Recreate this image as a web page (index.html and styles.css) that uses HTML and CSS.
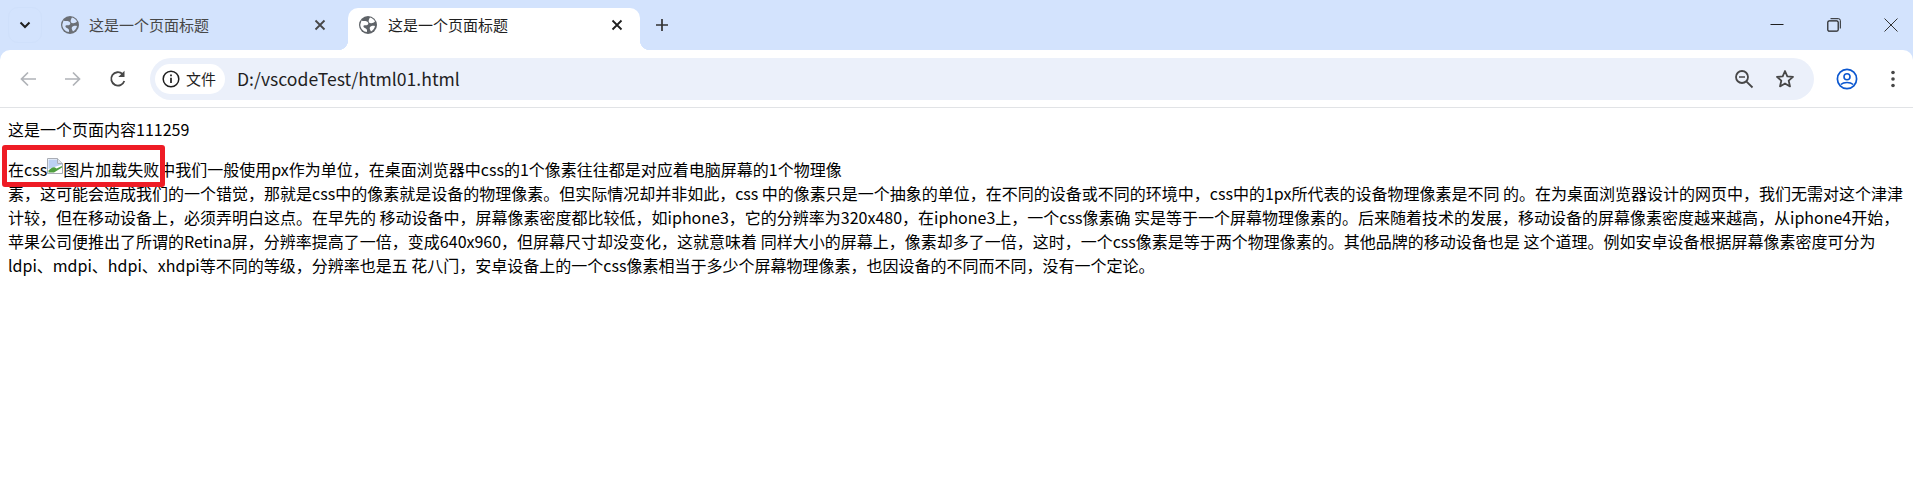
FILE: index.html
```html
<!DOCTYPE html>
<html lang="zh">
<head>
<meta charset="utf-8">
<title>这是一个页面标题</title>
<link rel="stylesheet" href="styles.css">
</head>
<body>
<header class="browser">
  <div class="tabstrip">
    <div class="tab-search"><svg width="14" height="14" viewBox="0 0 14 14"><path d="M2.500 4.500L7 9l4.500-4.500" fill="none" stroke="#1f1f1f" stroke-width="2"/></svg></div>
    <div class="tab">
      <svg class="globe" width="18" height="18" viewBox="0 0 18 18"><circle cx="9" cy="9" r="9" fill="#6b6f75"/><path d="M2.500 4.500C4 5.500 6 4.500 8 5.500s1.500 3 .2 3.500-3.500-.5-3.800 1 2 2 3 3 .5 2 .5 3C5 16 1 12.500 1.300 8.500zM11 1.500c2 .5 4 2 5 4-1.500 1.500-3 2-5 1.500S9.500 3.500 11 1.500zM11 11c1.500-1.500 3.500-1.500 5-1-.5 2.500-2 4.500-4 5.500-.5-1.500-2-3-1-4.500z" fill="#d3e3fd"/></svg>
      <span class="tab-title">这是一个页面标题</span>
      <svg class="tab-close" width="12" height="12" viewBox="0 0 12 12"><path d="M1.500 1.500l9 9M10.500 1.500l-9 9" stroke="#474747" stroke-width="1.800"/></svg>
    </div>
    <div class="tab tab-active">
      <svg class="globe" width="18" height="18" viewBox="0 0 18 18"><circle cx="9" cy="9" r="9" fill="#5f6368"/><path d="M2.500 4.500C4 5.500 6 4.500 8 5.500s1.500 3 .2 3.500-3.500-.5-3.800 1 2 2 3 3 .5 2 .5 3C5 16 1 12.500 1.300 8.500zM11 1.500c2 .5 4 2 5 4-1.500 1.500-3 2-5 1.500S9.500 3.500 11 1.500zM11 11c1.500-1.500 3.500-1.500 5-1-.5 2.500-2 4.500-4 5.500-.5-1.500-2-3-1-4.500z" fill="#fff"/></svg>
      <span class="tab-title">这是一个页面标题</span>
      <svg class="tab-close" width="12" height="12" viewBox="0 0 12 12"><path d="M1.500 1.500l9 9M10.500 1.500l-9 9" stroke="#1f1f1f" stroke-width="1.800"/></svg>
    </div>
    <svg class="new-tab" width="14" height="14" viewBox="0 0 14 14"><path d="M7 1v12M1 7h12" stroke="#333" stroke-width="1.700"/></svg>
    <div class="window-controls">
      <svg width="14" height="14" viewBox="0 0 14 14"><path d="M.5 6.500h13" stroke="#1f1f1f" stroke-width="1"/></svg>
      <svg width="14" height="14" viewBox="0 0 14 14"><rect x=".8" y="2.800" width="10.400" height="10.400" rx="1.500" fill="none" stroke="#1f1f1f" stroke-width="1.200"/><path d="M3.500 .7H11.500A1.800 1.800 0 0 1 13.300 2.500V10.500" fill="none" stroke="#1f1f1f" stroke-width="1"/></svg>
      <svg width="14" height="14" viewBox="0 0 14 14"><path d="M.5 .5l13 13M13.500 .5l-13 13" stroke="#333" stroke-width="1"/></svg>
    </div>
  </div>
  <div class="toolbar">
    <svg class="nav-icon" width="18" height="18" viewBox="0 0 18 18"><path d="M17 9H2.500M9 2.500L2.500 9 9 15.500" fill="none" stroke="#b0b3b8" stroke-width="1.700"/></svg>
    <svg class="nav-icon" width="18" height="18" viewBox="0 0 18 18"><path d="M1 9h14.500M9 2.500L15.500 9 9 15.500" fill="none" stroke="#b0b3b8" stroke-width="1.700"/></svg>
    <svg class="nav-icon" width="18" height="18" viewBox="0 0 18 18"><path d="M15.300 11A6.700 6.700 0 1 1 13.500 4" fill="none" stroke="#474747" stroke-width="1.800"/><path d="M15.500 .8v6.200H9.300z" fill="#474747"/></svg>
    <div class="omnibox">
      <div class="chip">
        <svg width="18" height="18" viewBox="0 0 18 18"><circle cx="9" cy="9" r="7.800" fill="none" stroke="#1f1f1f" stroke-width="1.500"/><path d="M9 7.800v5.200M9 4.500v1.800" stroke="#1f1f1f" stroke-width="1.700"/></svg>
        <span>文件</span>
      </div>
      <span class="url">D:/vscodeTest/html01.html</span>
      <div class="omni-actions">
        <svg width="20" height="20" viewBox="0 0 20 20"><circle cx="8" cy="8" r="6" fill="none" stroke="#474747" stroke-width="1.800"/><path d="M12.300 12.300l6.200 6.200" stroke="#474747" stroke-width="1.800"/><path d="M5 8h6" stroke="#474747" stroke-width="1.500"/></svg>
        <svg width="20" height="20" viewBox="0 0 20 20"><path d="M10 2l2.300 5.400 5.700.5-4.300 3.800 1.300 5.700-5-3-5 3 1.300-5.700L2 7.900l5.700-.5z" fill="none" stroke="#474747" stroke-width="1.800" stroke-linejoin="round"/></svg>
      </div>
    </div>
    <svg class="profile" width="22" height="22" viewBox="0 0 22 22"><circle cx="11" cy="11" r="9.600" fill="none" stroke="#0b57d0" stroke-width="1.700"/><circle cx="11" cy="8.800" r="3" fill="none" stroke="#0b57d0" stroke-width="1.600"/><path d="M4.800 16.500c3-2.600 9.400-2.600 12.400 0" fill="none" stroke="#0b57d0" stroke-width="1.600"/></svg>
    <svg class="menu" width="6" height="18" viewBox="0 0 6 18"><circle cx="3" cy="2.500" r="1.800" fill="#474747"/><circle cx="3" cy="9" r="1.800" fill="#474747"/><circle cx="3" cy="15.500" r="1.800" fill="#474747"/></svg>
  </div>
</header>
<main class="page">
  <div class="intro">这是一个页面内容111259</div>
  <p class="article">在css<span class="broken-img"><svg width="16" height="16" viewBox="0 0 16 16"><path d="M.5 .5h10l5 5v10H.5z" fill="#fff" stroke="#a9adb5"/><path d="M10.500 .5v5h5" fill="#dfe3ea" stroke="#a9adb5"/><path d="M1.500 1.500h8.500v4.500h5v.5L1.500 11z" fill="#bcd0f2"/><path d="M1.500 14.500v-2C4 10 6 8.500 8 9.500l1.500 1L15 8v1.500l-8 5z" fill="#4f9e3f"/></svg>图片加载失败</span>中我们一般使用px作为单位，在桌面浏览器中css的1个像素往往都是对应着电脑屏幕的1个物理像<br>素，这可能会造成我们的一个错觉，那就是css中的像素就是设备的物理像素。但实际情况却并非如此，css 中的像素只是一个抽象的单位，在不同的设备或不同的环境中，css中的1px所代表的设备物理像素是不同 的。在为桌面浏览器设计的网页中，我们无需对这个津津<br>计较，但在移动设备上，必须弄明白这点。在早先的 移动设备中，屏幕像素密度都比较低，如iphone3，它的分辨率为320x480，在iphone3上，一个css像素确 实是等于一个屏幕物理像素的。后来随着技术的发展，移动设备的屏幕像素密度越来越高，从iphone4开始，<br>苹果公司便推出了所谓的Retina屏，分辨率提高了一倍，变成640x960，但屏幕尺寸却没变化，这就意味着 同样大小的屏幕上，像素却多了一倍，这时，一个css像素是等于两个物理像素的。其他品牌的移动设备也是 这个道理。例如安卓设备根据屏幕像素密度可分为<br>ldpi、mdpi、hdpi、xhdpi等不同的等级，分辨率也是五 花八门，安卓设备上的一个css像素相当于多少个屏幕物理像素，也因设备的不同而不同，没有一个定论。</p>
  <div class="annotation"></div>
</main>
</body>
</html>
```
FILE: styles.css
```css
* { box-sizing: border-box; }
html, body { margin: 0; padding: 0; }
body { width: 1913px; height: 487px; overflow: hidden; background: #fff; color: #000; font: 16px/24px "Noto Sans CJK SC", "Noto Sans", sans-serif; }
.browser { height: 108px; background: #d3e3fd; }
.tabstrip { height: 50px; display: flex; align-items: flex-start; position: relative; }
.tab-search { width: 34px; height: 36px; margin: 7px 0 0 8px; border: 1px solid #cfe0fb; border-radius: 10px; display: flex; align-items: center; justify-content: center; }
.tab { width: 300px; height: 42px; margin-top: 8px; display: flex; align-items: center; padding: 0 22px 8px 13px; position: relative; }
.tab:nth-child(2) { margin-left: 6px; }
.globe { flex: none; }
.tab-title { margin-left: 10px; flex: 1; color: #474747; font-size: 15px; line-height: 20px; }
.tab-close { flex: none; }
.tab-active { width: 292px; background: #fff; border-radius: 10px 10px 0 0; padding: 0 17px 8px 11px; }
.tab-active .tab-title { color: #1f1f1f; margin-left: 11px; }
.tab-active::before, .tab-active::after { content: ""; position: absolute; bottom: 0; width: 10px; height: 10px; }
.tab-active::before { left: -10px; background: radial-gradient(circle at 0 0, transparent 10px, #fff 10.500px); }
.tab-active::after { right: -10px; background: radial-gradient(circle at 100% 0, transparent 10px, #fff 10.500px); }
.new-tab { margin: 18px 0 0 15px; }
.window-controls { margin-left: auto; display: flex; gap: 43px; padding: 18px 15px 0 0; }
.toolbar { height: 58px; background: #fff; border-radius: 10px 10px 0 0; border-bottom: 1px solid #e1e3e6; display: flex; align-items: center; padding: 0 17px 0 19px; }
.nav-icon { margin-right: 27px; flex: none; }
.nav-icon:nth-of-type(3) { margin-right: 23px; }
.omnibox { flex: 1; height: 42px; background: #ebf0fa; border-radius: 21px; display: flex; align-items: center; padding: 0 19px 0 5px; }
.chip { flex: none; width: 70px; height: 30px; background: #fff; border-radius: 15px; display: flex; align-items: center; gap: 6px; padding-left: 7px; font-size: 15px; color: #1f1f1f; }
.chip svg { flex: none; }
.url { margin-left: 12px; font-size: 17.600px; color: #1f1f1f; white-space: nowrap; }
.omni-actions { margin-left: auto; display: flex; gap: 21px; }
.profile { margin-left: 22px; flex: none; }
.menu { margin-left: 32px; flex: none; }
.page { padding: 9px 8px 0; position: relative; }
.intro { white-space: nowrap; }
.article { margin: 16px 0 0; white-space: nowrap; }
.broken-img svg { vertical-align: 2px; }
.annotation { position: absolute; left: 2px; top: 37px; width: 163px; height: 42px; border: 5px solid #ee1c25; border-radius: 3px; pointer-events: none; }
```
